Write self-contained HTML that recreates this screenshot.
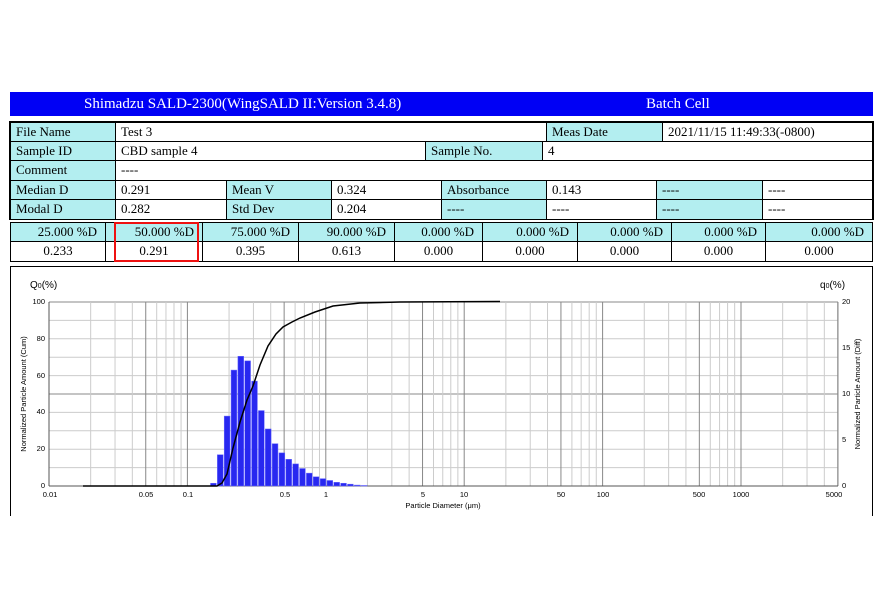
<!DOCTYPE html>
<html><head><meta charset="utf-8"><style>
body{margin:0;width:884px;height:599px;background:#fff;position:relative;overflow:hidden;font-family:"Liberation Serif",serif;font-size:13px;color:#000}
.c{position:absolute;box-sizing:border-box;border:1.5px solid #000;line-height:17px;padding-left:5px;white-space:nowrap;background:#fff}
.l{background:#b3eef0}
.r{text-align:right;padding-right:8px}
.m{text-align:center;padding-left:0}
</style></head><body>
<div style="position:absolute;left:10px;top:92px;width:863px;height:24px;background:#0000f5;color:#fff;font-size:15px;line-height:24px">
<span style="position:absolute;left:74px">Shimadzu SALD-2300(WingSALD II:Version 3.4.8)</span>
<span style="position:absolute;left:636px">Batch Cell</span></div>
<div style="position:absolute;left:9px;top:121px;width:865px;height:99px;background:#000"></div>
<div class="c l" style="left:10px;top:122px;width:106px;height:20px">File Name</div>
<div class="c" style="left:115px;top:122px;width:432px;height:20px">Test 3</div>
<div class="c l" style="left:546px;top:122px;width:117px;height:20px">Meas Date</div>
<div class="c" style="left:662px;top:122px;width:211px;height:20px">2021/11/15 11:49:33(-0800)</div>
<div class="c l" style="left:10px;top:141px;width:106px;height:20px">Sample ID</div>
<div class="c" style="left:115px;top:141px;width:311px;height:20px">CBD sample 4</div>
<div class="c l" style="left:425px;top:141px;width:118px;height:20px">Sample No.</div>
<div class="c" style="left:542px;top:141px;width:331px;height:20px">4</div>
<div class="c l" style="left:10px;top:160px;width:106px;height:21px">Comment</div>
<div class="c" style="left:115px;top:160px;width:758px;height:21px">----</div>
<div class="c l" style="left:10px;top:180px;width:106px;height:20px">Median D</div>
<div class="c" style="left:115px;top:180px;width:112px;height:20px">0.291</div>
<div class="c l" style="left:226px;top:180px;width:106px;height:20px">Mean V</div>
<div class="c" style="left:331px;top:180px;width:111px;height:20px">0.324</div>
<div class="c l" style="left:441px;top:180px;width:106px;height:20px">Absorbance</div>
<div class="c" style="left:546px;top:180px;width:111px;height:20px">0.143</div>
<div class="c l" style="left:656px;top:180px;width:107px;height:20px">----</div>
<div class="c" style="left:762px;top:180px;width:111px;height:20px">----</div>
<div class="c l" style="left:10px;top:199px;width:106px;height:21px">Modal D</div>
<div class="c" style="left:115px;top:199px;width:112px;height:21px">0.282</div>
<div class="c l" style="left:226px;top:199px;width:106px;height:21px">Std Dev</div>
<div class="c" style="left:331px;top:199px;width:111px;height:21px">0.204</div>
<div class="c l" style="left:441px;top:199px;width:106px;height:21px">----</div>
<div class="c" style="left:546px;top:199px;width:111px;height:21px">----</div>
<div class="c l" style="left:656px;top:199px;width:107px;height:21px">----</div>
<div class="c" style="left:762px;top:199px;width:111px;height:21px">----</div>

<div class="c l r" style="left:10px;top:222px;width:96px;height:20px">25.000 %D</div>
<div class="c l r" style="left:105px;top:222px;width:98px;height:20px">50.000 %D</div>
<div class="c l r" style="left:202px;top:222px;width:97px;height:20px">75.000 %D</div>
<div class="c l r" style="left:298px;top:222px;width:97px;height:20px">90.000 %D</div>
<div class="c l r" style="left:394px;top:222px;width:89px;height:20px">0.000 %D</div>
<div class="c l r" style="left:482px;top:222px;width:96px;height:20px">0.000 %D</div>
<div class="c l r" style="left:577px;top:222px;width:95px;height:20px">0.000 %D</div>
<div class="c l r" style="left:671px;top:222px;width:95px;height:20px">0.000 %D</div>
<div class="c l r" style="left:765px;top:222px;width:108px;height:20px">0.000 %D</div>
<div class="c m" style="left:10px;top:241px;width:96px;height:21px">0.233</div>
<div class="c m" style="left:105px;top:241px;width:98px;height:21px">0.291</div>
<div class="c m" style="left:202px;top:241px;width:97px;height:21px">0.395</div>
<div class="c m" style="left:298px;top:241px;width:97px;height:21px">0.613</div>
<div class="c m" style="left:394px;top:241px;width:89px;height:21px">0.000</div>
<div class="c m" style="left:482px;top:241px;width:96px;height:21px">0.000</div>
<div class="c m" style="left:577px;top:241px;width:95px;height:21px">0.000</div>
<div class="c m" style="left:671px;top:241px;width:95px;height:21px">0.000</div>
<div class="c m" style="left:765px;top:241px;width:108px;height:21px">0.000</div>
<div style="position:absolute;left:114px;top:222px;width:85px;height:40px;border:2px solid #e11;box-sizing:border-box"></div>

<div style="position:absolute;left:10px;top:266px;width:863px;height:250px;border:1.5px solid #000;border-bottom:none;box-sizing:border-box"></div>
<svg id="ch" width="884" height="599" style="position:absolute;left:0;top:0" font-family="Liberation Sans,sans-serif" font-size="7.5">
<g id="grid"></g><g id="bars"></g>
<polyline fill="none" stroke="#000" stroke-width="1.5" points="83,486 217,486 222,483 227,474 233,448 240,422 247,400 253,386 260,365 268,346 276,334 283,327 292,322 300,318 315,312 333,306 360,303 400,302 500,301.5"/>
<text x="30" y="288" font-size="10">Q<tspan font-size="7">0</tspan>(%)</text>
<text x="820" y="288" font-size="10">q<tspan font-size="7">0</tspan>(%)</text>
<g text-anchor="end"><text x="45" y="304">100</text><text x="45" y="341">80</text><text x="45" y="378">60</text><text x="45" y="414">40</text><text x="45" y="451">20</text><text x="45" y="488">0</text></g>
<g><text x="842" y="304">20</text><text x="842" y="350">15</text><text x="842" y="396">10</text><text x="842" y="442">5</text><text x="842" y="488">0</text></g>
<g text-anchor="middle"><text x="50" y="497">0.01</text><text x="146" y="497">0.05</text><text x="188" y="497">0.1</text><text x="285" y="497">0.5</text><text x="326" y="497">1</text><text x="423" y="497">5</text><text x="464" y="497">10</text><text x="561" y="497">50</text><text x="603" y="497">100</text><text x="699" y="497">500</text><text x="741" y="497">1000</text><text x="834" y="497">5000</text>
<text x="443" y="508">Particle Diameter (μm)</text>
<text transform="translate(26,394) rotate(-90)">Normalized Particle Amount (Cum)</text>
<text transform="translate(860,394) rotate(-90)">Normalized Particle Amount (Diff)</text></g>
</svg>
<script>
var g=document.getElementById('grid'),b=document.getElementById('bars'),s='',x0=49,d=138.4,T=302,B=486;
for(var i=0;i<=10;i++){var y=T+(B-T)*i/10;s+='<line x1="49" x2="838" y1="'+y+'" y2="'+y+'" stroke="'+(i%5==0?'#888':'#ccc')+'" stroke-width="1"/>';}
for(var e=-2;e<4;e++)for(var k=1;k<10;k++){var v=k*Math.pow(10,e);if(v>5000)break;var x=x0+d*(Math.log10(v)+2);s+='<line x1="'+x+'" x2="'+x+'" y1="302" y2="486" stroke="'+(k==1||k==5?'#888':'#ccc')+'"/>';}
s+='<line x1="838" x2="838" y1="302" y2="486" stroke="#888"/><line x1="49" x2="49" y1="302" y2="486" stroke="#555"/><line x1="49" x2="838" y1="486" y2="486" stroke="#555"/>';
g.innerHTML=s;
var h=[1.5,17,38,63,70.5,68,57,41,31,23,18,14.5,12,9.5,7,5,4,3,2,1.5,1,0.5,0.3];var bs='';
for(var j=0;j<h.length;j++){var x=210.5+j*6.85,hh=h[j]/100*184;bs+='<rect x="'+x+'" y="'+(B-hh)+'" width="5.8" height="'+hh+'" fill="#2828f0" stroke="#6a6aff" stroke-width="0.5"/>';}
b.innerHTML=bs;
</script>
</body></html>
